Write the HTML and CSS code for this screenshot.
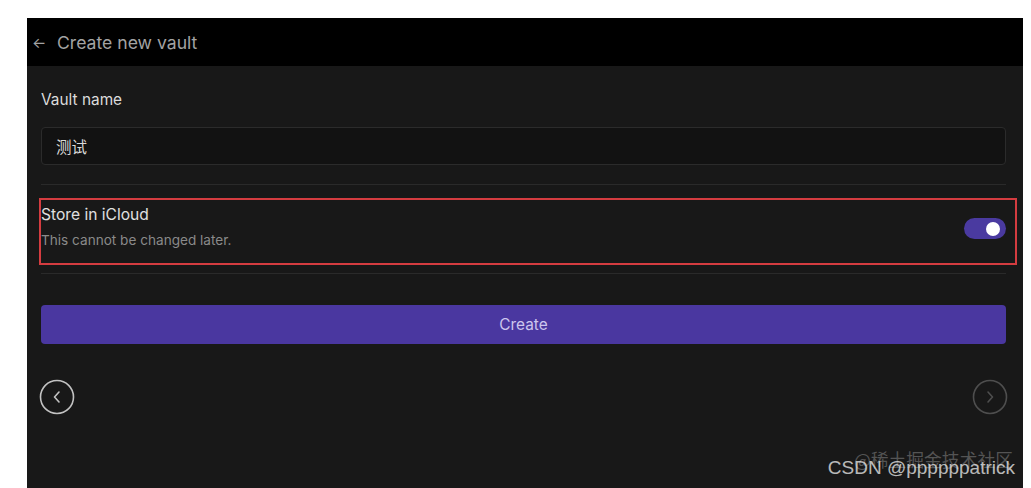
FILE: index.html
```html
<!DOCTYPE html>
<html lang="zh">
<head>
<meta charset="utf-8">
<title>Create new vault</title>
<link rel="stylesheet" href="styles.css">
</head>
<body>
<div class="panel">
  <header class="topbar">
    <span class="back-arrow">←</span>
    <span class="title">Create new vault</span>
  </header>
  <main class="content">
    <div class="label">Vault name</div>
    <div class="input">测试</div>
    <div class="divider"></div>
    <div class="row">
      <div class="row-text">
        <div class="row-title">Store in iCloud</div>
        <div class="row-sub">This cannot be changed later.</div>
      </div>
      <div class="toggle"><span class="knob"></span></div>
      <div class="highlight"></div>
    </div>
    <div class="divider divider-2"></div>
    <button class="create">Create</button>
    <div class="nav">
      <span class="circle">
        <svg viewBox="0 0 36 36" width="36" height="36"><circle cx="18" cy="18" r="16.5" fill="none" stroke="currentColor" stroke-width="1.6"/><path d="M20 13 L15.5 18 L20 23" fill="none" stroke="currentColor" stroke-width="1.6" stroke-linecap="round" stroke-linejoin="round"/></svg>
      </span>
      <span class="circle dim">
        <svg viewBox="0 0 36 36" width="36" height="36"><circle cx="18" cy="18" r="16.5" fill="none" stroke="currentColor" stroke-width="1.6"/><path d="M16 13 L20.5 18 L16 23" fill="none" stroke="currentColor" stroke-width="1.6" stroke-linecap="round" stroke-linejoin="round"/></svg>
      </span>
    </div>
  </main>
  <div class="watermark">
    <div class="wm-juejin">@稀土掘金技术社区</div>
    <div class="wm-csdn">CSDN @ppppppatrick</div>
  </div>
</div>
</body>
</html>
```

FILE: styles.css
```css
* { box-sizing: border-box; }
html, body { margin: 0; padding: 0; }
body {
  background: #ffffff;
  padding: 18px 0 0 27px;
  font-family: Inter, "Noto Sans", "Noto Sans CJK SC", sans-serif;
  overflow: hidden;
}
.panel {
  position: relative;
  width: 996px;
  height: 470px;
  background: #181818;
  overflow: hidden;
}
.topbar {
  height: 48px;
  background: #000;
  display: flex;
  align-items: center;
  padding-left: 5px;
  color: #a3a3a3;
  font-size: 17.6px;
}
.back-arrow {
  font-size: 15px;
  width: 25px;
}
.content {
  padding: 24px 17px 0 14px;
}
.label {
  font-size: 15.4px;
  line-height: 20px;
  color: #dcdcdc;
}
.input {
  margin-top: 17px;
  height: 38px;
  border: 1px solid #2b2b2b;
  border-radius: 4px;
  background: #121212;
  padding-left: 14px;
  display: flex;
  align-items: center;
  font-size: 15.5px;
  color: #dadada;
  font-family: "Noto Sans CJK SC", sans-serif;
}
.divider {
  margin-top: 19px;
  height: 1px;
  background: #2a2a2a;
}
.row {
  position: relative;
  margin-top: 13px;
  height: 67px;
  padding-top: 7px;
  display: flex;
  justify-content: space-between;
  align-items: flex-start;
}
.row-title {
  font-size: 15.6px;
  line-height: 20px;
  color: #e0e0e0;
}
.row-sub {
  margin-top: 7px;
  font-size: 13.6px;
  line-height: 17px;
  color: #8a8a8a;
}
.toggle {
  margin-top: 13px;
  width: 42px;
  height: 21px;
  border-radius: 11px;
  background: #4a3aa0;
  display: flex;
  align-items: center;
  justify-content: flex-end;
  padding-right: 6px;
}
.knob {
  width: 14px;
  height: 14px;
  border-radius: 50%;
  background: #fff;
}
.highlight {
  position: absolute;
  left: -2px;
  right: -11px;
  top: 0;
  bottom: 0;
  border: 2px solid #d43c40;
  pointer-events: none;
}
.divider-2 { margin-top: 8px; }
.create {
  display: block;
  width: 100%;
  margin-top: 31px;
  height: 39px;
  border: none;
  border-radius: 4px;
  background: #4a37a0;
  color: #cdc6ee;
  font-family: Inter, "Noto Sans", sans-serif;
  font-size: 15.4px;
}
.nav {
  margin: 35px -2px 0;
  display: flex;
  justify-content: space-between;
}
.circle {
  display: block;
  width: 36px;
  height: 36px;
  color: #c2c2c2;
}
.circle svg { display: block; }
.circle.dim { color: #4e4e4e; }
.watermark {
  position: absolute;
  right: 8px;
  bottom: 10px;
  width: 200px;
  height: 40px;
}
.wm-juejin {
  position: absolute;
  right: 2px;
  top: 10px;
  font-family: "Noto Sans CJK SC", sans-serif;
  font-size: 17.8px;
  line-height: 22px;
  color: rgba(200, 200, 200, 0.35);
  white-space: nowrap;
}
.wm-csdn {
  position: absolute;
  right: 0;
  top: 19px;
  font-family: "Liberation Sans", Arial, sans-serif;
  font-size: 19px;
  line-height: 22px;
  color: rgba(230, 230, 230, 0.8);
  white-space: nowrap;
}
```
